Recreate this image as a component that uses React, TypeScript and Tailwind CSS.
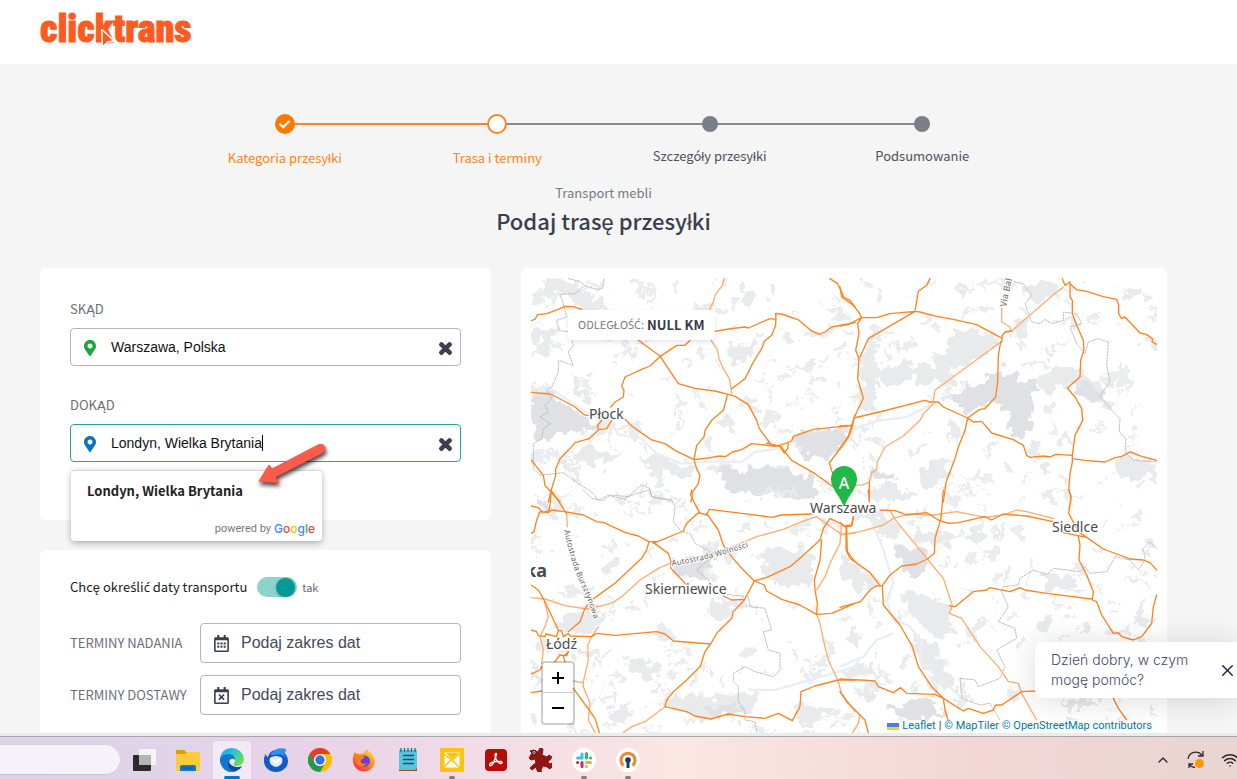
import React from "react";
import {
  FaCheck,
  FaMapMarkerAlt,
  FaRegCalendarAlt,
  FaRegCalendarTimes,
  FaTimes,
} from "react-icons/fa";
import { ChevronUp, Wifi, X } from "lucide-react";

const SOURCE = "font-['Noto_Sans_CJK_JP',sans-serif]";

/* ---------- Map data: tiles traced at three units per pixel ---------- */

type Tile = {
  at: string;
  roads: string[];
  light: string[];
  areas: string[];
  dense: string[];
  borders: string[];
  water: string[];
};

const TILES: Tile[] = [
  {
    at: "translate(-16 -16) scale(0.33333)",
    roads: [
      "M48 176 60 172 68 158 95 155 130 142 150 133 175 134 200 142",
      "M583 211 640 201 690 195 700 198 765 170 783 172 782 154 800 156 825 165 850 173 887 205 912 217 930 210 950 195 1020 182",
      "M783 154 782 190 770 220 748 238 740 260 715 300 690 350 650 380",
      "M945 50 968 65 980 90 985 105 1005 115 1020 135",
      "M370 235 436 283 450 305 490 365 540 379 600 387 640 397 660 403 700 428 725 475 733 500 765 543",
      "M525 235 510 250 485 250 436 283 405 312 380 322 330 345 320 372 327 385 325 405 300 420 287 435",
      "M637 397 632 420 625 445 590 475 570 505 567 525 545 550 537 593",
      "M48 391 105 396 125 405 180 435 207 458 220 461",
      "M260 475 248 490 250 505 222 530 180 542 160 565 135 590 122 620 122 640 110 680 100 720",
      "M290 475 275 500 250 503",
      "M330 472 350 492 408 533 450 545 480 565 537 593 580 588 615 582 632 584 652 570 680 563 710 545 750 549 780 553 810 545 830 537 835 523 895 502 1010 490 1020 460",
      "M537 593 545 620 555 640 550 665 533 690 528 720",
      "M755 543 800 555 810 570 830 595 900 635 955 675",
      "M820 545 818 560 808 573 797 557",
      "M1010 490 1000 525 943 603 955 640",
      "M48 593 85 640 90 670 135 720",
    ],
    light: [
      "M628 48 622 70 600 100 595 120 585 140 595 165 592 185 583 210 585 230 607 262 612 290 625 320 643 350 650 395",
    ],
    areas: [
      "M48 375 90 375 130 390 140 400 110 398 48 392Z",
      "M90 60 150 50 180 60 210 90 260 115 290 145 230 150 185 130 160 125 150 90 90 90Z",
      "M60 195 130 200 125 225 100 250 100 265 75 282 60 270 75 245 52 225Z",
      "M180 575 220 550 290 570 320 560 315 590 260 605 200 600 150 620Z",
      "M125 590 170 610 200 650 180 640 140 615Z",
      "M600 475 660 470 650 495 625 512Z",
      "M380 590 420 570 520 620 550 625 530 650 470 635 400 620Z",
      "M670 75 700 80 720 110 715 140 680 120Z",
      "M640 240 690 250 730 235 725 270 690 300 670 320 645 300Z",
      "M770 60 785 70 770 105 755 95Z",
      "M180 330 205 345 195 385 235 395 230 425 195 410 165 380Z",
      "M750 635 870 640 895 660 880 680 760 665Z",
    ],
    dense: [
      "M48 395 105 398 130 412 200 462 248 490 222 512 180 500 150 520 130 515 100 532 48 515Z",
      "M612 615 700 622 760 612 770 625 830 620 890 650 895 700 850 715 800 700 730 705 620 685 625 650Z",
      "M840 525 895 505 1000 505 1000 530 970 580 920 590 890 590 850 565Z",
    ],
    borders: [
      "M160 50 195 58 210 72 245 82 262 80 268 50",
      "M210 70 180 95 135 97 145 125 155 165 125 175 132 205 165 210 175 250 160 270 175 310 130 295 130 330 110 375 95 385 110 410 90 430 100 450 75 465 107 485 85 500 80 530 55 545 55 620 75 640 145 632 185 662 230 690 250 715 280 700 330 712 380 668 405 680 410 705 465 715",
    ],
    water: [
      "M48 382 110 382 205 445 290 485 310 518 380 530 425 575 500 605 590 598 680 600 720 570 790 560",
    ],
  },
  {
    at: "translate(309 -16) scale(0.33333)",
    roads: [
      "M0 75 5 105 40 130 57 152 65 167 53 185 57 215 47 265 57 290 53 350 70 408 42 468 38 490 30 515 0 560",
      "M0 192 25 187 65 167 110 167 150 155 225 148 240 150 290 163 340 172 410 188 470 220 485 228",
      "M270 50 260 70 235 88 225 148 85 230 60 285",
      "M0 492 36 490",
      "M485 240 487 220 495 210 515 207",
      "M482 240 475 280 473 360 467 405 435 440 418 443 383 468",
      "M42 468 130 447 255 415 270 420 295 420 310 435 383 468",
      "M88 660 88 720",
      "M383 468 375 505 355 555 345 590 318 660 310 720",
      "M383 468 400 480 425 478 455 513 520 533 550 550 560 580 570 586 610 582 630 585 648 577 697 580 697 590 735 595 795 600 825 587 845 583 870 570 905 583 950 595",
      "M667 50 675 70 690 60 690 105 697 115 697 155 710 190 730 235 732 265 722 295 720 345 682 378 705 405 725 440 728 475 705 520 697 580 697 600 690 635 686 685 692 700 692 720",
      "M690 65 710 83 740 88 790 104 830 112 836 130 836 155 845 170 855 165 900 213 920 218 937 230 937 240 950 247",
    ],
    light: [
      "M485 138 485 180 510 195 512 207",
      "M515 207 640 98 670 75",
      "M482 240 285 385 280 415",
      "M280 425 250 455 240 475 190 522 135 555 112 600 110 623 95 632 88 660 70 668 48 670",
    ],
    areas: [
      "M330 225 400 195 470 225 478 245 440 280 380 310 340 315 310 350 285 345 300 280 325 270Z",
      "M68 250 110 250 100 300 110 340 105 440 75 450 60 410 65 330Z",
      "M110 320 240 305 310 320 350 330 330 370 260 360 200 350 150 365 110 350Z",
      "M550 60 600 55 640 65 670 95 650 100 600 130 570 110Z",
      "M530 165 560 160 565 220 540 260 525 220Z",
      "M585 350 630 320 690 316 740 340 800 385 800 440 750 420 730 385 690 370 640 390 585 380Z",
      "M340 90 390 70 380 100 350 110Z",
      "M860 80 895 75 905 95 880 120 865 105Z",
      "M830 595 870 590 950 600 950 655 890 650 870 658 830 630Z",
      "M900 220 950 225 945 260 915 245Z",
      "M240 620 280 595 325 590 325 640 270 680 250 670Z",
      "M570 545 590 545 610 575 570 580 555 565Z",
      "M590 600 620 595 630 620 595 635Z",
      "M100 670 200 680 220 710 90 715Z",
      "M330 470 370 480 350 530 310 500Z",
      "M660 515 690 505 695 540 665 545Z",
    ],
    dense: [
      "M400 370 440 345 485 320 510 335 540 360 585 362 578 440 575 500 520 530 500 490 510 450 470 425 430 432 370 450 355 425 330 405Z",
      "M700 360 750 370 800 410 770 420 730 400Z",
      "M110 625 160 625 160 650 130 660 100 650Z",
    ],
    borders: [
      "M515 58 550 65 575 100 555 125 575 180 600 185 615 172 635 185 670 175 670 150 710 155 725 185 690 195 710 245 735 275 745 240 775 230 805 240 800 310 810 360 780 400 810 440 840 470 838 510 858 530 855 570 880 595 950 600",
    ],
    water: ["M40 500 120 475 200 465 270 430"],
  },
  {
    at: "translate(-16 212) scale(0.33333)",
    roads: [
      "M48 48 68 52 85 68 102 62 107 30 108 0",
      "M108 0 135 40 155 72",
      "M48 130 57 125 65 90 75 65 100 68 110 60 150 65 205 75 245 95 265 97 330 127 370 138 402 155",
      "M415 160 505 123 515 100 550 68 575 75 583 58 705 73 770 82 800 75 890 72",
      "M530 0 527 15 540 42 555 70",
      "M425 155 402 155 395 180 380 205 340 242 300 280 265 305 230 330 210 355 195 395 160 425",
      "M415 158 460 190 468 215 468 235 512 282",
      "M625 318 650 330 688 328",
      "M575 70 610 120 625 165 650 200 680 235 718 273",
      "M48 285 70 300 90 335 130 420 125 440 93 432 90 440 70 437 65 425 48 420",
      "M130 422 140 422 145 440 160 430 165 438 230 440 245 430 300 436 425 425 450 432 475 453 587 462",
      "M718 273 688 330 655 365 650 385 605 430 587 462 570 485 555 530 515 570 475 605 455 630 450 650",
      "M450 650 515 665 540 678 587 687 640 672 690 680 750 685 790 670 832 692 855 650 858 605 900 588 970 570 1020 570",
      "M718 273 755 262 825 230 860 200 915 150 925 115 945 85",
      "M718 273 748 285 755 303 800 328 855 345 905 373 950 370 1020 340",
      "M920 150 915 210 898 270 900 300 907 340 905 373",
      "M945 85 990 108 1010 105 1015 80",
      "M995 110 997 185 1020 215",
      "M175 595 215 650 240 685 253 728",
      "M48 552 75 540 80 530",
      "M120 515 135 495 155 497 160 485 145 500 150 515",
      "M48 608 80 603",
    ],
    light: [
      "M155 72 157 110",
      "M905 80 860 95 805 118 725 140 640 175 590 190 470 218 430 235 375 270 320 320 290 340 215 357 150 347 90 327 48 323",
      "M88 335 100 380 90 410 75 440 85 480 80 520",
      "M450 650 390 695 350 710 325 728",
      "M905 373 915 400 925 450 940 510 968 570 980 610 1020 665",
      "M980 100 975 160 945 220 930 260 905 300",
      "M905 80 940 105 980 133 1020 130",
      "M250 410 230 440 218 465 220 510 205 575 205 590 225 640 220 690 240 728",
      "M175 573 205 578",
    ],
    areas: [
      "M150 380 220 360 270 365 270 405 210 435 150 420 130 400Z",
      "M265 210 300 205 305 235 285 255 265 240Z",
      "M590 330 640 335 690 318 720 345 640 365 620 390 590 375Z",
      "M570 150 605 150 620 175 600 200 570 190Z",
      "M725 190 760 180 800 170 830 185 895 185 900 225 880 290 850 280 830 290 780 280 740 235Z",
      "M340 520 370 510 400 520 440 530 430 560 380 565 350 545Z",
      "M170 480 250 470 235 500 180 500Z",
      "M430 640 480 620 560 625 640 610 740 600 745 640 700 665 590 690 500 665Z",
      "M48 520 80 540 75 580 48 570Z",
      "M270 670 360 630 330 690 300 700Z",
      "M830 660 900 640 960 670 870 710Z",
      "M1000 425 1020 420 1020 460 1000 450Z",
      "M700 0 840 0 850 12 760 15Z",
    ],
    dense: [
      "M470 215 590 205 600 235 550 250 570 275 530 265 480 240Z",
      "M560 650 650 640 690 665 600 690Z",
      "M75 35 105 45 100 70 75 65Z",
    ],
    borders: [
      "M205 0 230 25 265 32 285 15 340 20 365 10 405 0 410 20 470 30 480 50 475 95 500 125 525 130 540 160 585 185 585 205 545 240 585 275 600 310 700 320 705 350 750 355 770 420 745 425 760 480 795 490 795 540 775 560 720 545 690 530 655 550 655 575 670 590 670 635 690 665 690 690 720 695 725 725",
    ],
    water: ["M700 600 780 600 850 580 1020 530"],
  },
  {
    at: "translate(309 212) scale(0.33333)",
    roads: [
      "M0 97 15 110 35 108 40 82",
      "M18 110 18 180 30 205 90 248 120 287",
      "M120 60 165 62 200 75 260 68 295 90 325 100 355 98 435 80 455 90 490 72 560 78 640 95",
      "M310 0 303 85 285 145 283 190 262 207 230 222 185 228 150 255 127 287 108 288 90 300 62 335 0 352",
      "M328 347 345 350 400 305 440 300 450 293 510 305 540 293 555 300 620 310 755 327",
      "M687 0 693 20 686 70 715 125 740 142 790 177 870 207 910 210 930 218 950 240",
      "M670 128 740 142",
      "M715 140 720 165 717 210 740 255 760 305 757 330 770 335 785 375 820 430 835 428 845 440 880 450 905 440 935 400 940 350 950 315",
      "M127 287 130 345 180 405 217 470 235 530 275 590 310 625",
      "M0 567 60 570 105 573 115 590 160 608 182 593 200 610 285 613 310 625 370 663 385 655 430 670 460 660 467 645 485 645 545 605 590 603",
      "M310 625 315 660 327 700",
      "M820 625 835 655 860 690",
      "M85 0 88 30",
      "M0 605 20 635 60 675 75 690 85 728",
    ],
    light: [
      "M0 135 60 125 130 105 160 85 205 72 280 75 350 65 435 82 490 75 530 60 560 65 640 85",
      "M150 62 170 95 240 180 262 207 310 265 337 347 328 370 365 385 420 470 475 530 505 575 535 580 545 610 590 690",
      "M60 675 55 700 38 728",
    ],
    areas: [
      "M0 180 40 215 100 245 115 285 60 300 30 280 0 285Z",
      "M210 120 300 125 360 135 330 160 240 160Z",
      "M200 300 300 330 330 370 340 430 310 450 260 420 220 380 190 340Z",
      "M220 430 290 470 310 530 350 570 330 600 290 580 240 520Z",
      "M620 250 690 260 715 275 700 295 650 310 615 290Z",
      "M880 345 910 330 920 400 885 400Z",
      "M360 130 420 120 440 145 400 160Z",
      "M600 390 640 385 620 420 595 425Z",
      "M720 400 750 395 745 430 715 430Z",
      "M10 540 90 530 110 560 60 560 30 565Z",
      "M20 425 50 425 50 455 20 450Z",
      "M860 265 900 255 900 280Z",
      "M60 60 150 80 190 130 130 140 90 110Z",
      "M660 630 750 625 760 650 690 660Z",
      "M40 590 110 600 100 630 50 620Z",
    ],
    dense: [
      "M160 165 200 170 250 185 265 250 210 255 190 220 165 200Z",
      "M140 660 180 650 240 615 295 635 310 690 180 690Z",
    ],
    borders: [
      "M950 175 930 155 910 175 915 210 895 240 870 210 825 200 800 245 750 250 735 230 720 245 640 235 620 255 580 240 540 265 535 285 490 290 485 305 505 350 475 395 525 415 530 445 470 480 495 530 480 565 415 590 405 570 360 565 365 625 420 645 450 640 480 690",
    ],
    water: [
      "M95 90 130 180 160 280 140 330 155 380 210 410 245 455 240 510 290 560 340 600 380 640",
      "M0 530 70 500 110 450 160 430",
    ],
  },
];

/* Small woodland patches scattered over the countryside. */
function makePatches(count: number): string[] {
  let seed = 41;
  const next = () => {
    seed = (seed * 16807) % 2147483647;
    return seed / 2147483647;
  };
  const list: string[] = [];
  for (let i = 0; i < count; i += 1) {
    const cx = next() * 626;
    const cy = next() * 455;
    const rx = 2 + next() * next() * 14;
    const ry = 2 + next() * next() * 9;
    const points: string[] = [];
    for (let k = 0; k < 11; k += 1) {
      const angle = (k / 11) * Math.PI * 2;
      const reach = 0.45 + next() * 0.8;
      points.push(
        `${(cx + Math.cos(angle) * rx * reach).toFixed(1)} ${(cy + Math.sin(angle) * ry * reach).toFixed(1)}`,
      );
    }
    list.push(`M${points.join(" ")}Z`);
  }
  return list;
}

const PATCHES = makePatches(520);

function MapCanvas() {
  return (
    <svg
      viewBox="0 0 626 455"
      preserveAspectRatio="xMinYMin slice"
      className="block h-full w-full"
      role="img"
      aria-label="Mapa trasy"
    >
      <defs>
        <filter id="ragged" x="0" y="0" width="626" height="455" filterUnits="userSpaceOnUse">
          <feTurbulence type="fractalNoise" baseFrequency="0.09" numOctaves="3" seed="7" result="noise" />
          <feDisplacementMap in="SourceGraphic" in2="noise" scale="22" xChannelSelector="R" yChannelSelector="G" />
        </filter>
        <path id="amber-road" d="M33 252 Q41 290 50 306 Q60 330 67 354" />
        <path id="freedom-road" d="M141 288 Q185 281 228 265" />
        <path id="baltic-road" d="M475 29 Q478 14 483 -8" />
      </defs>
      <rect width="626" height="455" fill="#fff" />
      <g filter="url(#ragged)">
        <path d={PATCHES.join("")} fill="#ebecee" />
        {TILES.map((tile) => (
          <g key={tile.at} transform={tile.at}>
            <path d={tile.areas.join("")} fill="#e9eaec" />
            <path d={tile.dense.join("")} fill="#dfe1e4" />
          </g>
        ))}
      </g>
      {TILES.map((tile) => (
        <g key={tile.at} transform={tile.at} fill="none" strokeLinejoin="round">
          <path d={tile.water.join("")} stroke="#eaeef4" strokeWidth="7" />
        </g>
      ))}
      {TILES.map((tile) => (
        <g key={tile.at} transform={tile.at} fill="none" strokeLinejoin="round" strokeLinecap="round">
          <path d={tile.borders.join("")} stroke="#bdbdbd" strokeWidth="3" strokeDasharray="5 4" />
          <path d={tile.light.join("")} stroke="#ffae72" strokeWidth="4" />
          <path d={tile.roads.join("")} stroke="#ff841f" strokeWidth="4" />
        </g>
      ))}
      <g
        fontFamily="'Noto Sans', sans-serif"
        fill="#4a4a4a"
        stroke="#fff"
        strokeWidth="2"
        strokeLinejoin="round"
        paintOrder="stroke"
      >
        <g fontSize="8" fontWeight="500" fill="#7d7773">
          <text>
            <textPath href="#amber-road">Autostrada Bursztynowa</textPath>
          </text>
          <text>
            <textPath href="#freedom-road">Autostrada Wolności</textPath>
          </text>
          <text fontSize="9">
            <textPath href="#baltic-road">Via Bal</textPath>
          </text>
        </g>
        <g fontSize="14">
          <text x="58" y="141">Płock</text>
          <text x="279" y="235">Warszawa</text>
          <text x="521" y="254">Siedlce</text>
          <text x="114" y="316">Skierniewice</text>
          <text x="15" y="371">Łódź</text>
        </g>
        <text x="-6" y="299" fontSize="18" fontWeight="700">ka</text>
      </g>
      <path d="M313 188a13 13 0 0 1 13 13c0 10-8 15-13 28-5-13-13-18-13-28a13 13 0 0 1 13-13Z" fill="#22b846" />
      <text x="313" y="211" textAnchor="middle" fontSize="16" fontFamily="'Noto Sans', sans-serif" fontWeight="500" fill="#fff">
        A
      </text>
    </svg>
  );
}

/* ---------- Header and steps ---------- */

function Logo() {
  return (
    <a
      href="#"
      className="relative block text-[38px] leading-[44px] font-black text-[#ff5a1f] font-['Liberation_Sans_Narrow','Roboto_Condensed','Liberation_Sans',sans-serif] [-webkit-text-stroke:1px_#ff5a1f]"
    >
      clicktrans
      <svg viewBox="0 0 14 18" className="absolute top-[22px] left-[60px] h-[18px] w-[14px]" aria-hidden="true">
        <path d="M2.500 2 12.500 11.500 7.500 12 3 16.500Z" fill="#ff5a1f" stroke="#fff" strokeWidth="3" paintOrder="stroke" />
      </svg>
    </a>
  );
}

type StepState = "done" | "current" | "todo";

const STEPS: { name: string; state: StepState }[] = [
  { name: "Kategoria przesyłki", state: "done" },
  { name: "Trasa i terminy", state: "current" },
  { name: "Szczegóły przesyłki", state: "todo" },
  { name: "Podsumowanie", state: "todo" },
];

function lineColor(index: number) {
  if (index < 0 || index > 2) return "bg-transparent";
  return index === 0 ? "bg-[#ff8420]" : "bg-[#858a90]";
}

function Stepper() {
  return (
    <ol className="mx-auto grid w-full max-w-[850px] grid-cols-4">
      {STEPS.map((step, i) => (
        <li key={step.name} className="flex flex-col items-center">
          <div className="flex h-5 w-full items-center">
            <span className={`h-0.5 flex-1 ${lineColor(i - 1)}`} />
            {step.state === "done" && (
              <span className="flex size-5 items-center justify-center rounded-full bg-[#ff7800] text-white">
                <FaCheck className="size-[11px]" />
              </span>
            )}
            {step.state === "current" && (
              <span className="size-5 rounded-full border-2 border-[#ff8420] bg-white" />
            )}
            {step.state === "todo" && <span className="size-4 rounded-full bg-[#7a7e87]" />}
            <span className={`h-0.5 flex-1 ${lineColor(i)}`} />
          </div>
          <span
            className={
              step.state === "todo"
                ? "mt-3 text-[13px] leading-5 text-[#4d525d]"
                : "mt-3.5 text-[13px] leading-5 text-[#ff8420]"
            }
          >
            {step.name}
          </span>
        </li>
      ))}
    </ol>
  );
}

/* ---------- Form ---------- */

const FIELD_TEXT = "font-['Liberation_Sans',Arial,sans-serif]";

/* The CJK face has no acute s and c, so those come from Noto Sans. */
function Acute({ children }: { children: string }) {
  return <span className="font-['Noto_Sans',sans-serif]">{children}</span>;
}

function PlaceField(props: { id: string; label: string; value: string; pin: string; active?: boolean; children?: React.ReactNode }) {
  return (
    <div>
      <label htmlFor={props.id} className="block text-[13px] leading-[22px] text-[#6b6f79]">
        {props.label}
      </label>
      <div className="relative mt-2">
        <div
          className={
            props.active
              ? "flex h-[38px] items-center rounded border border-[#26a69a] bg-white pr-1.5 pl-[13px]"
              : "flex h-[38px] items-center rounded border border-[#b3b5bd] bg-white pr-1.5 pl-[13px]"
          }
        >
          <FaMapMarkerAlt className={`mt-0.5 h-4 w-3 shrink-0 ${props.pin}`} />
          <input
            id={props.id}
            defaultValue={props.value}
            className={`ml-[15px] min-w-0 flex-1 bg-transparent text-sm text-[#111] outline-none ${FIELD_TEXT}`}
          />
          <button type="button" aria-label="Wyczyść" className="mt-0.5 text-[#3a3f4e]">
            <FaTimes className="size-[17px]" stroke="currentColor" strokeWidth={40} />
          </button>
        </div>
        {props.children}
      </div>
    </div>
  );
}

function Suggestions() {
  return (
    <div className="absolute top-[46px] left-px z-10 w-[251px] rounded-sm border-t border-[#d9d9d9] bg-white shadow-[0_2px_6px_rgba(0,0,0,0.3)]">
      <button type="button" className="block h-[40px] w-full px-4 text-left text-[13px] font-bold text-[#222]">
        Londyn, Wielka Brytania
      </button>
      <p className="flex h-[30px] items-center justify-end gap-[3px] pt-1.5 pr-[7px] text-[11px] text-[#777] font-['Roboto',sans-serif]">
        powered by
        <span className="text-[12px] font-medium font-['Inter',sans-serif]">
          <span className="text-[#4285f4]">G</span>
          <span className="text-[#ea4335]">o</span>
          <span className="text-[#fbbc05]">o</span>
          <span className="text-[#4285f4]">g</span>
          <span className="text-[#34a853]">l</span>
          <span className="text-[#ea4335]">e</span>
        </span>
      </p>
    </div>
  );
}

function PointerArrow() {
  return (
    <svg viewBox="0 0 76 50" className="pointer-events-none absolute top-4 left-[185px] z-20 h-[50px] w-[76px] drop-shadow-[1px_3px_2px_rgba(0,0,0,0.75)]" aria-hidden="true">
      <path
        d="M4 41 14 25 17 29 63 5Q68 3 70 7 71 11 67 13L20 37 24 42.500 5 41.500Z"
        fill="#fb5b4b"
        stroke="#fb5b4b"
        strokeLinejoin="round"
      />
    </svg>
  );
}

function DateField(props: { id: string; label: string; icon: React.ReactNode }) {
  return (
    <div className="flex items-center">
      <label htmlFor={props.id} className="w-[130px] shrink-0 text-[13px] text-[#6b6f79]">
        {props.label}
      </label>
      <div className="flex h-10 min-w-0 flex-1 items-center rounded border border-[#b3b5bd] bg-white pl-[13px] text-[#3a3f4e]">
        {props.icon}
        <input
          id={props.id}
          placeholder="Podaj zakres dat"
          className={`ml-3 min-w-0 flex-1 bg-transparent text-base text-[#454a58] outline-none placeholder:text-[#454a58] ${FIELD_TEXT}`}
        />
      </div>
    </div>
  );
}

/* ---------- Map card ---------- */

function MapCard() {
  return (
    <section className="min-h-0 rounded-t-md bg-white px-2.5 pt-2.5">
      <div className="relative h-full overflow-hidden">
        <MapCanvas />
        <div className="absolute top-8 left-[37px] flex h-[30px] items-center gap-[3px] rounded bg-white px-2.5 shadow-[0_2px_5px_rgba(0,0,0,0.1)]">
          <span className="text-[11px] text-[#757983]">
            ODLEGŁO<Acute>ŚĆ</Acute>:
          </span>
          <span className="text-[13px] font-bold text-[#363a4b]">NULL KM</span>
        </div>
        <div className="absolute bottom-2 left-2.5 flex w-[34px] flex-col rounded border-2 border-black/20 bg-white bg-clip-padding text-black">
          <button type="button" aria-label="Przybliż" className="flex h-[30px] items-center justify-center border-b border-[#ccc]">
            <svg viewBox="0 0 14 14" className="size-[14px]" aria-hidden="true">
              <path d="M7 1v12M1 7h12" stroke="currentColor" strokeWidth="2" />
            </svg>
          </button>
          <button type="button" aria-label="Oddal" className="flex h-[30px] items-center justify-center">
            <svg viewBox="0 0 14 14" className="size-[14px]" aria-hidden="true">
              <path d="M1 7h12" stroke="currentColor" strokeWidth="2" />
            </svg>
          </button>
        </div>
        <div className="absolute right-0 bottom-0 flex h-[13px] items-center gap-[3px] bg-white/80 px-[5px] text-[11px] text-[#0078a8] font-['Roboto',sans-serif]">
          <svg viewBox="0 0 12 8" className="h-2 w-3" aria-hidden="true">
            <path fill="#4c7be1" d="M0 0h12v4H0z" />
            <path fill="#ffd500" d="M0 4h12v3H0z" />
          </svg>
          <a href="#">Leaflet</a>
          <span className="text-[#333]">|</span>
          <a href="#">© MapTiler</a>
          <a href="#">© OpenStreetMap contributors</a>
        </div>
      </div>
    </section>
  );
}

function ChatBubble() {
  return (
    <aside className="absolute right-0 bottom-[35px] z-20 flex h-[56px] w-[202px] items-center justify-between rounded-l-lg bg-white pl-4 shadow-[0_2px_30px_rgba(0,0,0,0.15)]">
      <p className="w-[150px] text-[14px] leading-5 font-light text-[#414b68] font-['Inter',sans-serif]">
        Dzień dobry, w czym mogę pomóc?
      </p>
      <button type="button" aria-label="Zamknij" className="text-[#1b2540]">
        <X className="size-[19px]" strokeWidth={1.8} />
      </button>
    </aside>
  );
}

/* ---------- Taskbar ---------- */

const APPS: { name: string; mark?: "active" | "open"; icon: React.ReactNode }[] = [
  {
    name: "Widok zadań",
    icon: (
      <>
        <rect x="1" y="7" width="18" height="16" rx="1" fill="#2b2b2b" />
        <rect x="7" y="1" width="17" height="16" rx="1" fill="#f4f4f4" />
        <rect x="7" y="7" width="12" height="10" fill="#b5b5b5" />
      </>
    ),
  },
  {
    name: "Eksplorator plików",
    icon: (
      <>
        <path d="M0 3q0-1 1-1h7l2 2h13q1 0 1 1v4H0Z" fill="#dd9a0b" />
        <path d="M0 6h9l2-2h12q1 0 1 1v17q0 1-1 1H1q-1 0-1-1Z" fill="#fecb3e" />
        <path d="M4 23v-4q0-2 2-2h12q2 0 2 2v4Z" fill="#1477cf" />
        <path d="M7 20h10" stroke="#0b4f95" strokeWidth="1.200" />
      </>
    ),
  },
  {
    name: "Edge",
    mark: "active",
    icon: (
      <>
        <defs>
          <linearGradient id="edge-top" x1="0" y1="0" x2="1" y2="0.600">
            <stop offset="0" stopColor="#1d9ee0" />
            <stop offset="0.500" stopColor="#2cc3d5" />
            <stop offset="1" stopColor="#6fdc4f" />
          </linearGradient>
        </defs>
        <path d="M12 0a12 12 0 0 1 12 11c0 5-4 7-7 7s-4-2-3-3c2-2 1-6-4-6S1 12 0 15C-1 6 4 0 12 0Z" fill="url(#edge-top)" />
        <path d="M0 12c0-3 4-6 9-6 4 0 6 3 6 6-3-3-6 0-6 3 0 4 4 8 8 8-9 4-17-3-17-11Z" fill="#1277d3" />
        <path d="M9 13c-3 5 1 10 7 10 3-1 5-3 6-5-2 1-4 1-6 1-4-1-7-3-7-6Z" fill="#0b4a9c" />
      </>
    ),
  },
  {
    name: "Thunderbird",
    icon: (
      <>
        <path d="M2 6c0 2 1 3 2 3 1-4 4-7 8-7 6 0 12 4 12 11 0 6-5 11-12 11S0 19 0 13c0-3 0-5 2-7Z" fill="#1558c8" />
        <path d="M6 7c3-5 9-8 16-6 0 3-1 4-3 5 2 1 3 3 4 5-3-4-8-6-13-4Z" fill="#2f8fec" />
        <path d="M6 10q6-4 12 0 2 7-6 9-8-2-6-9Z" fill="#d8ecff" />
        <path d="m6.500 10 5.500 5 5.500-5" fill="none" stroke="#fff" strokeWidth="2" />
      </>
    ),
  },
  {
    name: "Chrome",
    icon: (
      <>
        <circle cx="12" cy="12" r="12" fill="#fbbc05" />
        <path d="M1.600 6A12 12 0 0 1 22.400 6H12a6 6 0 0 0-5.200 9Z" fill="#e33b2e" />
        <path d="M1.600 6A12 12 0 0 0 12 24l5.200-9A6 6 0 0 1 6.800 15Z" fill="#229a4b" />
        <circle cx="12" cy="12" r="6" fill="#fff" />
        <circle cx="12" cy="12" r="4.700" fill="#2f74e8" />
      </>
    ),
  },
  {
    name: "Firefox",
    icon: (
      <>
        <defs>
          <linearGradient id="fox" x1="0.900" y1="0" x2="0.200" y2="1">
            <stop offset="0" stopColor="#ffe438" />
            <stop offset="0.500" stopColor="#ff8a1e" />
            <stop offset="1" stopColor="#f5264b" />
          </linearGradient>
        </defs>
        <path d="M3 4c1 1 2 2 4 2 3 0 5-1 6-3 1-1 2-2 3-2 0 2 1 3 3 4 5 6 5 12 0 16-5 4-12 3-15-1C0 16 0 9 3 4Z" fill="url(#fox)" />
        <circle cx="12.500" cy="13" r="5.500" fill="#6b3fd6" />
        <path d="M4 9c3-3 7-2 9 1-2 0-3 1-4 2-1 3 3 5 6 3-2 4-8 4-10 1-1-2-1-5-1-7Z" fill="#ff7a22" />
      </>
    ),
  },
  {
    name: "Notatnik",
    icon: (
      <>
        <rect x="3" y="2" width="18" height="21" rx="1" fill="#56c3e0" />
        <path d="M3 22h16l2-2v3H3Z" fill="#a3501d" />
        <path d="M5 0v4M8.500 0v4M12 0v4M15.500 0v4M19 0v4" stroke="#17628a" strokeWidth="1.200" />
        <path d="M7 7.500h11M7 11.500h11M7 15.500h11" stroke="#14546f" strokeWidth="1.300" />
      </>
    ),
  },
  {
    name: "Poczta",
    mark: "open",
    icon: (
      <>
        <rect width="24" height="24" rx="1" fill="#ffc20e" />
        <path d="M4.500 4.500h15v15h-15Z" fill="#fff" />
        <path d="m4 6 8 6.500L19.500 6M4 19l7-7M12 12l8 8" fill="none" stroke="#ffc20e" strokeWidth="1.500" />
        <path d="m6 5 13 0-7 6.500Z" fill="#ffc20e" />
      </>
    ),
  },
  {
    name: "Acrobat",
    icon: (
      <>
        <rect x="1" y="1" width="22" height="22" rx="4" fill="#b40f05" />
        <path
          d="M12 5.500c-1.500 0-1 3.500.5 6.500s4.500 4.500 5.500 3-3-2-6-1.500-6.500 2-6.500 3.500 3 1 4.500-3.500 3.500-8 2-8Z"
          fill="none"
          stroke="#fff"
          strokeWidth="1.300"
        />
      </>
    ),
  },
  {
    name: "IrfanView",
    icon: (
      <>
        <path
          d="M1 10 4 5 2 3l4-1 4 2 2-4 3 1-1 6 5 2 2-2 3 2-2 3-2 1 1 3 4-1v3l-3 3-3-2-4-1-2 4 1 3-3 1-2-4-1-3-4 3-2-2 3-3 3-2-1-4-4 1Z"
          fill="#8f1515"
          stroke="#8f1515"
          strokeLinejoin="round"
        />
        <circle cx="6" cy="4.500" r="2" fill="#ddd" stroke="#5a1010" />
        <circle cx="6" cy="4.500" r="0.800" fill="#222" />
      </>
    ),
  },
  {
    name: "Slack",
    mark: "open",
    icon: (
      <>
        <circle cx="12" cy="12" r="12" fill="#fff" />
        <g strokeWidth="3" strokeLinecap="round">
          <path d="M10 6v4M5.500 10H10" stroke="#36c5f0" />
          <path d="M14.500 5.500V10M18.500 10h.1" stroke="#2eb67d" />
          <path d="M14.500 14.500h4M14.500 18.500v.1" stroke="#ecb22e" />
          <path d="M10 14.500v4M5.500 14.500h.1" stroke="#e01e5a" />
        </g>
      </>
    ),
  },
  {
    name: "OpenVPN",
    mark: "open",
    icon: (
      <>
        <circle cx="12" cy="12" r="12" fill="#fff" />
        <path d="M7.500 17.500a7 7 0 1 1 9 0" fill="none" stroke="#ee8730" strokeWidth="3" />
        <circle cx="12" cy="12" r="2.800" fill="#1c3a63" />
        <path d="M10.500 12h3v8h-3Z" fill="#1c3a63" />
      </>
    ),
  },
];

function Taskbar() {
  return (
    <footer className="flex h-[43px] shrink-0 items-center justify-between border-t border-[#aaa5ad] bg-[linear-gradient(90deg,#d9d4e8_0%,#e8d3e8_26%,#f3dde6_40%,#fae6e2_55%,#f2d6d6_80%,#e9d5d2_100%)]">
      <div className="flex h-full items-center">
        <input
          type="search"
          aria-label="Wyszukaj"
          className="mb-[-4px] h-[30px] w-[120px] rounded-r-full border-b border-[#c7c2d0] bg-[#f5f3f9] px-3 outline-none"
        />
        <ul className="flex h-full pl-0.5">
          {APPS.map((app) => (
            <li key={app.name} className="flex h-full w-11 flex-col px-[3px] pt-1">
              <button
                type="button"
                aria-label={app.name}
                className={
                  app.mark === "active"
                    ? "flex h-full flex-col items-center justify-between rounded-t bg-white/50 pt-[7px]"
                    : "flex h-full flex-col items-center justify-between pt-[7px]"
                }
              >
                <svg viewBox="0 0 24 24" className="size-6" aria-hidden="true">
                  {app.icon}
                </svg>
                {app.mark === "active" && <span className="h-[3px] w-4 rounded-full bg-[#0b72cc]" />}
                {app.mark === "open" && <span className="h-[3px] w-1.5 rounded-full bg-[#857d80]" />}
              </button>
            </li>
          ))}
        </ul>
      </div>
      <div className="mr-[-2px] flex items-center gap-4 pt-1 text-[#2b2729]">
        <ChevronUp className="size-4" strokeWidth={2} />
        <svg viewBox="0 0 18 18" className="size-[18px]" aria-hidden="true">
          <path d="M1 8a8 8 0 0 1 14-4M16 0v5h-5M2 17v-4h4M2 13.500a8 8 0 0 0 6 3" fill="none" stroke="currentColor" strokeWidth="1.300" />
          <circle cx="12.500" cy="12.500" r="4.500" fill="#ff9800" />
        </svg>
        <Wifi className="size-[18px]" strokeWidth={2} />
      </div>
    </footer>
  );
}

export default function App() {
  return (
    <div className={`flex h-screen flex-col overflow-hidden bg-[#f5f5f5] text-[#3a3f4e] ${SOURCE}`}>
      <header className="flex h-16 shrink-0 bg-white pt-[7px] pl-10">
        <Logo />
      </header>

      <div className="relative flex min-h-0 flex-1 flex-col overflow-hidden border-b-[3px] border-[#ececec]">
        <main className="flex min-h-0 flex-1 flex-col pt-[50px] pr-[70px] pl-10">
          <Stepper />
          <p className="mt-4 text-center text-[13px] leading-[18px] text-[#767a84]">Transport mebli</p>
          <h1 className="mt-[3px] text-center text-[22px] leading-[30px] font-medium text-[#3a3f4e]">Podaj trasę przesyłki</h1>

          <div className="mt-[33px] grid min-h-0 flex-1 grid-cols-[451fr_646fr] grid-rows-[minmax(0,1fr)] gap-[30px]">
            <form className="flex min-h-0 flex-col gap-[30px]">
              <section className="flex shrink-0 flex-col gap-7 rounded-md bg-white px-[30px] pt-[30px] pb-[58px]">
                <PlaceField id="from" label="SKĄD" value="Warszawa, Polska" pin="text-[#17a637]" />
                <PlaceField id="to" label="DOKĄD" value="Londyn, Wielka Brytania" pin="text-[#0a73b9]" active>
                  <span className="absolute top-[11px] left-[192px] h-4 w-px bg-black" />
                  <Suggestions />
                  <PointerArrow />
                </PlaceField>
              </section>
              <section className="shrink-0 rounded-t-md bg-white px-[30px] pt-[26px] pb-10">
                <label className="flex h-[22px] items-center text-[13px] text-[#1a1a1a]">
                  <span>
                    Chcę okre<Acute>ś</Acute>li<Acute>ć</Acute> daty transportu
                  </span>
                  <input type="checkbox" defaultChecked className="peer sr-only" />
                  <span className="ml-2.5 flex h-5 w-10 items-center justify-end rounded-full bg-[#8cd3cf] pr-0.5">
                    <span className="size-[19px] rounded-full bg-[#009a94] shadow-[0_1px_3px_rgba(0,0,0,0.25)]" />
                  </span>
                  <span className="ml-[5px] text-[11px] text-[#666a74]">tak</span>
                </label>
                <div className="mt-[25px] flex flex-col gap-3">
                  <DateField id="pickup" label="TERMINY NADANIA" icon={<FaRegCalendarAlt className="h-[17px] w-[15px]" />} />
                  <DateField id="delivery" label="TERMINY DOSTAWY" icon={<FaRegCalendarTimes className="h-[17px] w-[15px]" />} />
                </div>
              </section>
            </form>
            <MapCard />
          </div>
        </main>
        <ChatBubble />
      </div>

      <Taskbar />
    </div>
  );
}
